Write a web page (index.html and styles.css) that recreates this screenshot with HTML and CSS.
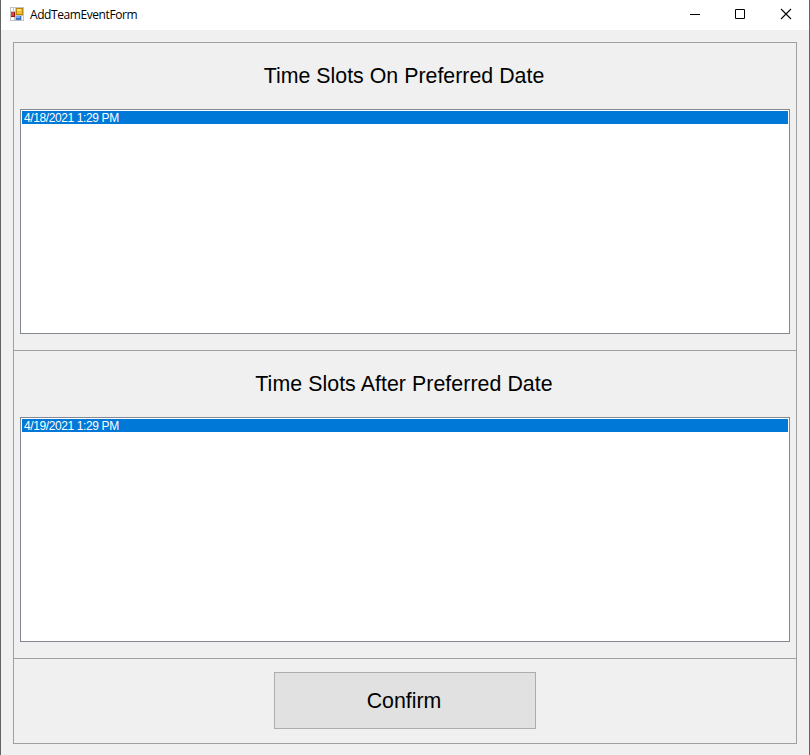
FILE: index.html
```html
<!DOCTYPE html>
<html lang="en">
<head>
<meta charset="utf-8">
<title>AddTeamEventForm</title>
<link rel="stylesheet" href="styles.css">
</head>
<body>
<div class="window">
  <header class="titlebar">
    <svg class="app-icon" width="14" height="14" viewBox="0 0 14 14" shape-rendering="crispEdges">
      <path fill="#c3c3c3" d="M0 0h14v14H0z"/>
      <path fill="#fff" d="M1 1h2v3H1zM4 1h1v3H4zM1 10h3v3H1zM12 9h1v4h-1z"/>
      <path fill="#8f1a12" d="M1 5h4v5H1z"/>
      <path fill="#d8453a" d="M1 5h3v4H1z"/>
      <path fill="#b8860b" d="M6 1h7v7H6z"/>
      <path fill="#f6bd2c" d="M7 2h5v5H7z"/>
      <path fill="#ffdf7a" d="M7 2h4v2H7z"/>
      <path fill="#3e6fc4" d="M6 9h5v4H6z"/>
      <path fill="#76a9f2" d="M6 9h4v2H6z"/>
    </svg>
    <span class="title">AddTeamEventForm</span>
    <div class="controls">
      <svg width="46" height="29" viewBox="0 0 46 29"><path d="M18 14.5h10" stroke="#000"/></svg>
      <svg width="46" height="29" viewBox="0 0 46 29"><path d="M17.5 9.5h9v9h-9z" stroke="#000" fill="none"/></svg>
      <svg width="45" height="29" viewBox="0 0 45 29"><path d="M17 9l10 10M27 9L17 19" stroke="#000" stroke-width="1.1"/></svg>
    </div>
  </header>
  <main class="table">
    <section class="slots">
      <h2 class="heading">Time Slots On Preferred Date</h2>
      <ul class="list"><li class="item">4/18/2021 1:29 PM</li></ul>
    </section>
    <section class="slots">
      <h2 class="heading after-date">Time Slots After Preferred Date</h2>
      <ul class="list"><li class="item">4/19/2021 1:29 PM</li></ul>
    </section>
    <section class="actions"><button class="confirm">Confirm</button></section>
  </main>
</div>
</body>
</html>
```
FILE: styles.css
```css
* { box-sizing: border-box; }
body { margin: 0; }
.window {
  width: 810px;
  height: 755px;
  background: #f0f0f0;
  border: solid #646464;
  border-width: 0 1px;
  overflow: hidden;
}
.titlebar {
  height: 30px;
  background: #fff;
  display: flex;
  align-items: flex-start;
  padding-left: 9px;
}
.app-icon { margin-top: 7px; }
.title {
  margin-left: 6px;
  font: 12px/29px "Open Sans", sans-serif;
  letter-spacing: -0.42px;
  color: #000;
}
.controls { display: flex; margin-left: auto; }
.controls svg { display: block; }
.table {
  width: 784px;
  height: 702px;
  margin: 12px 0 0 12px;
  border: 1px solid #a0a0a0;
  display: grid;
  grid-template-rows: 308px 308px 84px;
}
.slots {
  border-bottom: 1px solid #a0a0a0;
  padding: 0 6px;
}
.heading {
  margin: 0;
  height: 66px;
  padding-right: 2px;
  text-align: center;
  font: 21.33px/66px "Liberation Sans", Arial, sans-serif;
  letter-spacing: 0.02px;
  color: #000;
}
.after-date { letter-spacing: 0.06px; }
.list {
  margin: 0;
  padding: 1px;
  list-style: none;
  height: 225px;
  background: #fff;
  border: 1px solid #828790;
}
.item {
  height: 13px;
  padding-left: 2px;
  background: #0078d7;
  color: #fff;
  font: 12px/14px "Liberation Sans", Arial, sans-serif;
  letter-spacing: -0.39px;
  white-space: nowrap;
}
.actions { padding-top: 13px; }
.confirm {
  display: block;
  width: 262px;
  height: 57px;
  margin: 0 auto;
  padding: 2px 2px 0 0;
  background: #e1e1e1;
  border: 1px solid #adadad;
  border-radius: 0;
  font: 21.33px/53px "Liberation Sans", Arial, sans-serif;
  color: #000;
}
```
